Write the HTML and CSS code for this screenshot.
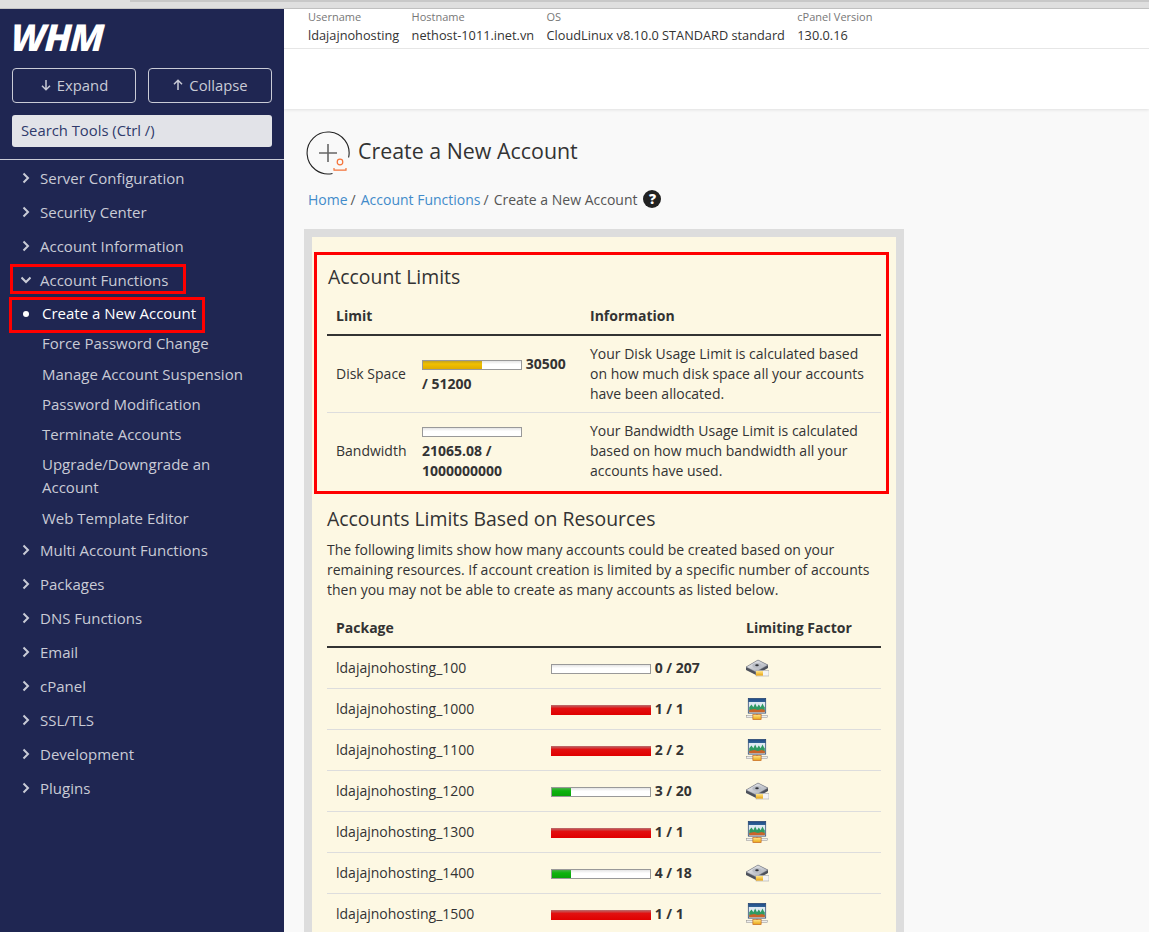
FILE: index.html
```html
<!DOCTYPE html>
<html lang="en">
<head>
    <meta charset="UTF-8">
    <title>WHM - Create a New Account</title>
    <link rel="stylesheet" href="styles.css">
</head>
<body>
    <svg class="icon-defs" width="0" height="0">
        <defs>
            <linearGradient id="diskTop" x1="0" y1="0" x2="1" y2="1">
                <stop offset="0" stop-color="#f6f6f8"/>
                <stop offset="1" stop-color="#9ca1ab"/>
            </linearGradient>
            <linearGradient id="plate" x1="0" y1="0" x2="0" y2="1">
                <stop offset="0" stop-color="#ffe68a"/>
                <stop offset="1" stop-color="#e9a411"/>
            </linearGradient>
            <linearGradient id="screen" x1="0" y1="0" x2="0" y2="1">
                <stop offset="0" stop-color="#1f4a86"/>
                <stop offset="0.22" stop-color="#2f6196"/>
                <stop offset="0.26" stop-color="#dfe9f2"/>
                <stop offset="1" stop-color="#dfe9f2"/>
            </linearGradient>
            <symbol id="icon-disk" viewBox="0 0 24 18">
                <path d="M1 8 L13 1 L23 6 L23 9 L11 16 L1 11 Z" fill="#4d515b"/>
                <path d="M1 8 L13 1 L23 6 L11 13 Z" fill="url(#diskTop)" stroke="#6a6e78" stroke-width="0.5"/>
                <ellipse cx="12" cy="6.6" rx="4.6" ry="2.5" fill="#b9bdc5"/>
                <ellipse cx="12" cy="6.2" rx="1.8" ry="1" fill="#2f3238"/>
                <rect x="11" y="11.5" width="13" height="5.5" fill="#f4f4f4" stroke="#a9a9a9" stroke-width="0.6"/>
                <rect x="11" y="12" width="7" height="4.6" fill="url(#plate)"/>
            </symbol>
            <symbol id="icon-net" viewBox="0 0 24 24">
                <rect x="2.5" y="0.5" width="19" height="16" fill="url(#screen)" stroke="#24426e" stroke-width="0.8"/>
                <path d="M3.5 15 L3.5 10 L6 7 L8 10 L10 6 L12 10 L14 7 L16 10 L18 6 L20 10 L20.5 9 L20.5 15 Z" fill="#2f9a63"/>
                <path d="M3.5 15.6 L3.5 13 L9 12 L13 13 L17 12 L20.5 13 L20.5 15.6 Z" fill="#c9642a"/>
                <rect x="0.5" y="19" width="23" height="2.4" fill="#eee" stroke="#888" stroke-width="0.5"/>
                <rect x="11" y="16.5" width="2" height="3" fill="#999"/>
                <rect x="7.5" y="18" width="9" height="5.5" fill="url(#plate)" stroke="#c2601a" stroke-width="0.7"/>
            </symbol>
        </defs>
    </svg>

    <div class="browser-strip"><div class="browser-tab"></div></div>

    <div class="app">
        <aside class="sidebar">
            <div class="logo"><span class="logo-text">WHM</span><span class="logo-reg">®</span></div>
            <div class="tree-buttons">
                <button class="tree-btn">
                    <svg width="12" height="12" viewBox="0 0 12 12"><path d="M6 1v9.5M2 6.8l4 3.9 4-3.9" fill="none" stroke="currentColor" stroke-width="1.5"/></svg>
                    Expand
                </button>
                <button class="tree-btn">
                    <svg width="12" height="12" viewBox="0 0 12 12"><path d="M6 11V1.5M2 5.2l4-3.9 4 3.9" fill="none" stroke="currentColor" stroke-width="1.5"/></svg>
                    Collapse
                </button>
            </div>
            <div class="search-box">Search Tools (Ctrl /)</div>

            <ul class="nav">
                <li class="nav-item"><svg class="chev" viewBox="0 0 10 12"><path d="M2.5 1.5L7 6l-4.5 4.5" /></svg>Server Configuration</li>
                <li class="nav-item"><svg class="chev" viewBox="0 0 10 12"><path d="M2.5 1.5L7 6l-4.5 4.5" /></svg>Security Center</li>
                <li class="nav-item"><svg class="chev" viewBox="0 0 10 12"><path d="M2.5 1.5L7 6l-4.5 4.5" /></svg>Account Information</li>
                <li class="nav-item nav-open"><svg class="chev" viewBox="0 0 10 12"><path d="M0.5 3.5L5 8l4.5-4.5" /></svg>Account Functions</li>
                <li class="sub-item active">Create a New Account</li>
                <li class="sub-item">Force Password Change</li>
                <li class="sub-item">Manage Account Suspension</li>
                <li class="sub-item">Password Modification</li>
                <li class="sub-item">Terminate Accounts</li>
                <li class="sub-item">Upgrade/Downgrade an Account</li>
                <li class="sub-item sub-last">Web Template Editor</li>
                <li class="nav-item"><svg class="chev" viewBox="0 0 10 12"><path d="M2.5 1.5L7 6l-4.5 4.5" /></svg>Multi Account Functions</li>
                <li class="nav-item"><svg class="chev" viewBox="0 0 10 12"><path d="M2.5 1.5L7 6l-4.5 4.5" /></svg>Packages</li>
                <li class="nav-item"><svg class="chev" viewBox="0 0 10 12"><path d="M2.5 1.5L7 6l-4.5 4.5" /></svg>DNS Functions</li>
                <li class="nav-item"><svg class="chev" viewBox="0 0 10 12"><path d="M2.5 1.5L7 6l-4.5 4.5" /></svg>Email</li>
                <li class="nav-item"><svg class="chev" viewBox="0 0 10 12"><path d="M2.5 1.5L7 6l-4.5 4.5" /></svg>cPanel</li>
                <li class="nav-item"><svg class="chev" viewBox="0 0 10 12"><path d="M2.5 1.5L7 6l-4.5 4.5" /></svg>SSL/TLS</li>
                <li class="nav-item"><svg class="chev" viewBox="0 0 10 12"><path d="M2.5 1.5L7 6l-4.5 4.5" /></svg>Development</li>
                <li class="nav-item"><svg class="chev" viewBox="0 0 10 12"><path d="M2.5 1.5L7 6l-4.5 4.5" /></svg>Plugins</li>
            </ul>
        </aside>

        <main class="main">
            <div class="topbar">
                <div class="server-info">
                    <div class="info-col"><span class="info-label">Username</span><span class="info-value">ldajajnohosting</span></div>
                    <div class="info-col"><span class="info-label">Hostname</span><span class="info-value">nethost-1011.inet.vn</span></div>
                    <div class="info-col"><span class="info-label">OS</span><span class="info-value">CloudLinux v8.10.0 STANDARD standard</span></div>
                    <div class="info-col"><span class="info-label">cPanel Version</span><span class="info-value">130.0.16</span></div>
                </div>
            </div>

            <div class="content">
                <div class="page-title">
                    <svg class="title-icon" width="44" height="44" viewBox="0 0 44 44">
                        <path d="M26.5 42.5A21 21 0 1 1 42.6 26.5" fill="none" stroke="#222" stroke-width="1.1"/>
                        <path d="M22 13v18M13 22h18" stroke="#666" stroke-width="1.6"/>
                        <circle cx="34" cy="31" r="2.8" fill="none" stroke="#f4733a" stroke-width="1.2"/>
                        <path d="M28 37v2.2h12V37" fill="none" stroke="#f4733a" stroke-width="1.2"/>
                    </svg>
                    <h1>Create a New Account</h1>
                </div>
                <div class="breadcrumb">
                    <a>Home</a><span class="sep">/</span>
                    <a>Account Functions</a><span class="sep">/</span>
                    <span class="crumb-current">Create a New Account</span>
                    <span class="help-icon">?</span>
                </div>

                <div class="panel">
                    <h2 class="first-heading">Account Limits</h2>
                    <table class="limits">
                        <thead>
                            <tr><th class="col-limit">Limit</th><th class="col-usage"></th><th>Information</th></tr>
                        </thead>
                        <tbody>
                            <tr>
                                <td class="limit-name">Disk Space</td>
                                <td><span class="bar"><span class="fill yellow"></span></span> <b>30500 / 51200</b></td>
                                <td>Your Disk Usage Limit is calculated based on how much disk space all your accounts have been allocated.</td>
                            </tr>
                            <tr>
                                <td class="limit-name">Bandwidth</td>
                                <td><span class="bar"></span> <b>21065.08 / 1000000000</b></td>
                                <td>Your Bandwidth Usage Limit is calculated based on how much bandwidth all your accounts have used.</td>
                            </tr>
                        </tbody>
                    </table>

                    <h2 class="second-heading">Accounts Limits Based on Resources</h2>
                    <p class="intro">The following limits show how many accounts could be created based on your remaining resources. If account creation is limited by a specific number of accounts then you may not be able to create as many accounts as listed below.</p>

                    <table class="packages">
                        <thead>
                            <tr><th class="col-package">Package</th><th class="col-count"></th><th>Limiting Factor</th></tr>
                        </thead>
                        <tbody>
                            <tr><td>ldajajnohosting_100</td><td><span class="bar"></span> <b>0 / 207</b></td><td><svg class="factor disk"><use href="#icon-disk"/></svg></td></tr>
                            <tr><td>ldajajnohosting_1000</td><td><span class="bar full"></span> <b>1 / 1</b></td><td><svg class="factor net"><use href="#icon-net"/></svg></td></tr>
                            <tr><td>ldajajnohosting_1100</td><td><span class="bar full"></span> <b>2 / 2</b></td><td><svg class="factor net"><use href="#icon-net"/></svg></td></tr>
                            <tr><td>ldajajnohosting_1200</td><td><span class="bar"><span class="fill green"></span></span> <b>3 / 20</b></td><td><svg class="factor disk"><use href="#icon-disk"/></svg></td></tr>
                            <tr><td>ldajajnohosting_1300</td><td><span class="bar full"></span> <b>1 / 1</b></td><td><svg class="factor net"><use href="#icon-net"/></svg></td></tr>
                            <tr><td>ldajajnohosting_1400</td><td><span class="bar"><span class="fill green"></span></span> <b>4 / 18</b></td><td><svg class="factor disk"><use href="#icon-disk"/></svg></td></tr>
                            <tr><td>ldajajnohosting_1500</td><td><span class="bar full"></span> <b>1 / 1</b></td><td><svg class="factor net"><use href="#icon-net"/></svg></td></tr>
                        </tbody>
                    </table>
                </div>
            </div>
        </main>
    </div>

    <!-- red boxes drawn over the screenshot -->
    <div class="mark mark-functions"></div>
    <div class="mark mark-create"></div>
    <div class="mark mark-limits"></div>
</body>
</html>
```

FILE: styles.css
```css
* {
    box-sizing: border-box;
}

html, body {
    height: 100%;
}

body {
    margin: 0;
    position: relative;
    overflow: hidden;
    font-family: "Open Sans", "Noto Sans", sans-serif;
    font-size: 14px;
    color: #333;
    background-color: #f9f9f9;
}

.icon-defs {
    position: absolute;
}

.browser-strip {
    height: 9px;
    background-color: #dfdfdf;
    border-bottom: 1px solid #c4c4c4;
}

.browser-tab {
    height: 2px;
    margin-left: 130px;
    background-color: #c8c8c8;
}

.app {
    display: flex;
    height: calc(100% - 9px);
}

/* sidebar */
.sidebar {
    width: 284px;
    flex: none;
    background-color: #1f2652;
    color: #c9cbd6;
    font-size: 15px;
}

.logo {
    display: flex;
    align-items: flex-start;
    height: 59px;
    padding: 8px 0 0 13px;
    color: #fff;
}

.logo-text {
    display: block;
    width: 90px;
    font-size: 37px;
    line-height: 40px;
    font-weight: 800;
    transform: skewX(-14deg) scaleX(0.93);
    transform-origin: 0 50%;
    letter-spacing: -1px;
    margin-left: -2px;
}

.logo-reg {
    font-size: 6px;
    line-height: 6px;
    margin: 7px 0 0 -1px;
    color: #c9cbd6;
}

.tree-buttons {
    display: flex;
    gap: 12px;
    padding: 0 12px;
}

.tree-btn {
    display: flex;
    flex: 1;
    align-items: center;
    justify-content: center;
    gap: 5px;
    height: 35px;
    padding: 0 0 1px;
    background: transparent;
    border: 1px solid #c9cbd6;
    border-radius: 4px;
    color: #c9cbd6;
    font-family: inherit;
    font-size: 14.8px;
}

.search-box {
    height: 32px;
    margin: 12px;
    padding-left: 9px;
    background-color: #e2e3e8;
    border-radius: 3px;
    color: #2f3a6b;
    font-size: 14.8px;
    line-height: 31px;
}

.nav {
    list-style: none;
    margin: 0;
    padding: 1px 0 0;
    border-top: 1px solid #c9cbd6;
}

.nav-item {
    display: flex;
    align-items: center;
    height: 34px;
    padding-left: 21px;
}

.nav-open {
    margin-bottom: 1.4px;
}

.chev {
    width: 10px;
    height: 12px;
    margin-right: 9px;
    fill: none;
    stroke: #c9cbd6;
    stroke-width: 2;
}

.sub-item {
    position: relative;
    padding: 3.65px 40px 3.65px 42px;
    line-height: 23px;
}

.sub-last {
    margin-bottom: -0.65px;
}

.sub-item.active {
    color: #fff;
}

.sub-item.active::before {
    content: "";
    position: absolute;
    left: 23px;
    top: 13px;
    width: 6px;
    height: 6px;
    border-radius: 50%;
    background-color: #fff;
}

/* main area */
.main {
    flex: 1;
    min-width: 0;
}

.topbar {
    height: 100px;
    background-color: #fff;
    box-shadow: 0 1px 3px rgba(0, 0, 0, 0.1);
}

.server-info {
    display: flex;
    gap: 12.4px;
    height: 40px;
    padding: 1px 0 0 24px;
    border-bottom: 1px solid #e6e6e6;
}

.info-col {
    display: flex;
    flex-direction: column;
}

.info-label {
    font-size: 11px;
    line-height: 14px;
    color: #777;
}

.info-value {
    margin-top: 2px;
    font-size: 12.75px;
    line-height: 18px;
    color: #333;
}

.content {
    padding: 22px 0 0 20px;
}

.page-title {
    display: flex;
    align-items: center;
    height: 44px;
    padding-left: 2px;
}

.title-icon {
    flex: none;
}

h1 {
    margin: 0 0 6px 8px;
    font-size: 21.4px;
    font-weight: 400;
    color: #333;
}

.breadcrumb {
    display: flex;
    align-items: center;
    height: 24px;
    margin: 12px 0 0 4px;
    color: #555;
    font-size: 14px;
}

.breadcrumb a {
    color: #428bca;
}

.sep {
    margin: 0 5px 0 3px;
    color: #555;
}

.help-icon {
    display: block;
    width: 18px;
    height: 18px;
    margin-left: 6px;
    border-radius: 50%;
    background-color: #222;
    color: #fff;
    font-size: 14px;
    font-weight: 800;
    line-height: 18px;
    text-align: center;
}

.panel {
    width: 600px;
    margin-top: 18px;
    padding: 0 15px 40px;
    background-color: #fdf8e3;
    border: 8px solid #ddd;
}

h2 {
    margin: 0;
    font-size: 19.4px;
    font-weight: 400;
    line-height: 26px;
    color: #333;
}

.first-heading {
    padding: 27px 0 0 1px;
}

.second-heading {
    margin-top: 17px;
}

.intro {
    margin: 8px 0 0;
    line-height: 20px;
}

table {
    width: 100%;
    border-collapse: collapse;
    table-layout: fixed;
    line-height: 20px;
}

th {
    padding: 8px 9px;
    text-align: left;
    font-weight: 700;
    border-bottom: 2px solid #333;
}

td {
    padding: 8px 9px;
    vertical-align: middle;
    border-top: 1px solid #ddd;
}

tbody tr:first-child td {
    border-top: none;
}

.limits {
    margin-top: 8px;
}

.col-limit {
    width: 86px;
}

.col-usage {
    width: 168px;
}

.limit-name {
    white-space: nowrap;
}

.limits th {
    height: 36px;
}

.packages {
    margin-top: 9px;
}

.col-package {
    width: 215px;
}

.col-count {
    width: 195px;
}

.packages th {
    height: 38px;
}

.packages td {
    height: 41px;
    padding-top: 0;
    padding-bottom: 0;
}

/* progress bars */
.bar {
    display: inline-block;
    width: 100px;
    height: 10px;
    vertical-align: -1px;
    background: linear-gradient(#e4e4e4, #fff 40%, #fff);
    border: 1px solid #999;
    overflow: hidden;
}

.bar.full {
    background: linear-gradient(#b87070, #e21010 35%, #e00000);
    border: none;
}

.fill {
    display: block;
    height: 10px;
    margin: -1px 0 0 -1px;
}

.fill.yellow {
    width: 60px;
    background: linear-gradient(#b59a2c, #f0c000 40%, #dca800);
}

.fill.green {
    width: 20px;
    background: linear-gradient(#5cab5c, #0db40d 40%, #0a9f0a);
}

.factor {
    display: block;
}

.factor.disk {
    width: 24px;
    height: 18px;
    margin-left: -1px;
}

.factor.net {
    width: 22px;
    height: 24px;
}

/* annotations */
.mark {
    position: absolute;
    border: 3px solid #f00;
    pointer-events: none;
}

.mark-functions {
    left: 10px;
    top: 264px;
    width: 176px;
    height: 30px;
}

.mark-create {
    left: 9px;
    top: 297px;
    width: 196px;
    height: 36px;
}

.mark-limits {
    left: 314px;
    top: 252px;
    width: 575px;
    height: 242px;
}
```
